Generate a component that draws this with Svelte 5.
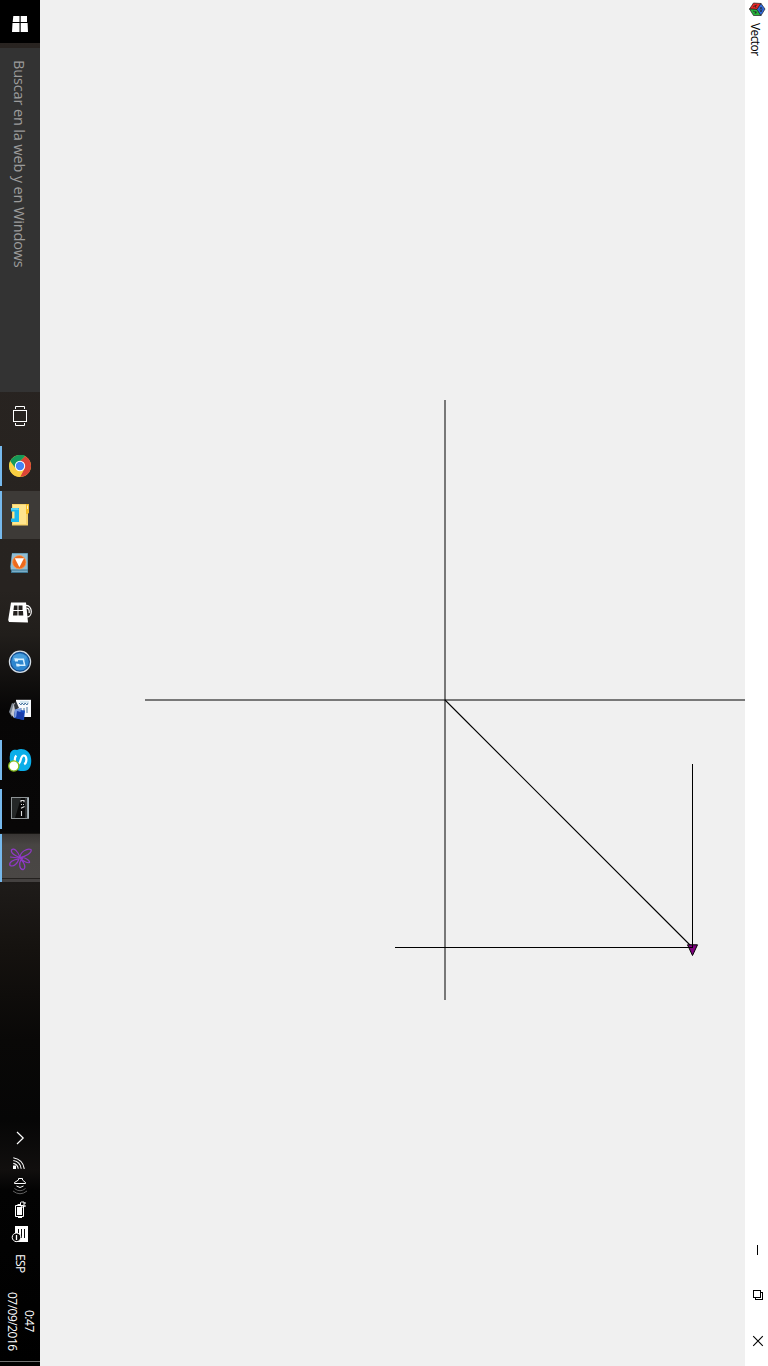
<script>
  const indicatorColor = '#76b9ed';
  const apps = [
    { id: 'taskview' },
    { id: 'chrome', open: true },
    { id: 'explorer', open: true, lit: true },
    { id: 'player' },
    { id: 'store' },
    { id: 'itunes' },
    { id: 'notes' },
    { id: 'skype', open: true },
    { id: 'console', open: true },
    { id: 'vector', open: true, lit: true, current: true }
  ];
</script>

<div class="screen">
  <aside class="taskbar">
    <div class="start">
      <svg width="40" height="43" viewBox="0 0 40 43" fill="#fff">
        <path d="M13.3 16H19.5V22H12.7ZM20.7 16H27V22H20.7ZM12.5 23H19.5V32H12ZM20.7 23H27.6L28 32H20.7Z" />
      </svg>
    </div>
    <div class="search"><span>Buscar en la web y en Windows</span></div>
    <nav>
      {#each apps as app (app.id)}
        <div class="app" class:lit={app.lit} class:current={app.current}>
          {#if app.open}<i class="mark" style:background={indicatorColor}></i>{/if}
          {#if app.id === 'taskview'}
            <svg viewBox="0 392 40 49" fill="none" stroke="#fff">
              <rect x="13.5" y="410.5" width="13" height="11" />
              <path d="M15.5 409V406.5H24.5V409M15.5 423V425.5H24.5V423" />
            </svg>
          {:else if app.id === 'chrome'}
            <svg viewBox="0 441 40 49">
              <circle cx="20" cy="466" r="11" fill="#f9cf42" />
              <path d="M20 466L10.5 471.5A11 11 0 0 1 20 455L25 455.3L20 461Z" fill="#159a5a" />
              <path d="M20 461L25 456.2A11 11 0 0 1 25 475.8L20 477L24.3 468.5Z" fill="#db4437" />
              <path d="M20 461L25 456.2Q22 455 20 455L12 459L11 469Z" fill="#159a5a" />
              <path d="M10.2 461A11 11 0 0 0 20 477L24.5 468.5L16 469Z" fill="#f9cf42" />
              <circle cx="20" cy="466" r="5.2" fill="#fff" />
              <circle cx="20" cy="466" r="4.2" fill="#4285f4" />
            </svg>
          {:else if app.id === 'explorer'}
            <svg viewBox="0 490 40 49">
              <path d="M12 504H28V525.5H12Z" fill="#f6d36b" />
              <path d="M13 505H26V524H13Z" fill="#ffe58e" />
              <path d="M26 504H29V513L27.5 514H26Z" fill="#f5bd29" />
              <path d="M27 505.5H28V509H27Z" fill="#fff3c5" />
              <path d="M11 508H19V522H11V518.5H14.5V511.5H11Z" fill="#1cb8ed" />
              <path d="M11 508H18L19 510H11Z" fill="#54d2f8" />
            </svg>
          {:else if app.id === 'player'}
            <svg viewBox="0 539 40 49">
              <path d="M12 553H28V573H11V568L10 567Z" fill="#3f7893" />
              <path d="M12 553.5H27.5V569.5H10.5Z" fill="#91bdd4" />
              <path d="M12 570.5H27.5V572H12Z" fill="#79adc7" />
              <circle cx="19.3" cy="562.2" r="6.7" fill="#ed6a1d" stroke="#f8a15b" stroke-width=".8" />
              <path d="M14.8 558.3H24L19.4 567.2Z" fill="#fff" />
            </svg>
          {:else if app.id === 'store'}
            <svg viewBox="0 588 40 49">
              <path d="M11 602.5H26L28 622.5L9 622L8.2 620Z" fill="#fff" />
              <path d="M26 605.5C29 605 31.3 608.5 31.3 611.5S29.5 617 27 617M26.5 608.5C28.5 607.5 29.5 610 29.2 613" fill="none" stroke="#fff" stroke-width="1.2" />
              <path d="M14 605.5H17.5V610H13.5ZM18.5 605.5H22.5V610H18.5ZM13.4 611H17.5V615.5H13ZM18.5 611H23L23.3 615.5H18.5Z" fill="#24211f" />
            </svg>
          {:else if app.id === 'itunes'}
            <svg viewBox="0 637 40 49">
              <circle cx="20" cy="661.8" r="10.6" fill="#124c8c" stroke="#d4dde5" stroke-width="1.2" />
              <circle cx="20" cy="661.8" r="8.8" fill="#2d86cf" />
              <path d="M13 656Q20 651 27 657L25 661H13Z" fill="#62b3e8" opacity=".5" />
              <path d="M16 659.2H23.3L24.7 665.3H17.5" fill="none" stroke="#d5efff" stroke-width="1.5" />
              <path d="M14.3 658L18 659V661.5H15ZM16 663.5L19.5 664V666.5H16.5Z" fill="#d5efff" />
            </svg>
          {:else if app.id === 'notes'}
            <svg viewBox="0 686 40 49">
              <path d="M16 699.8H31V717H16Z" fill="#f7f9fc" />
              <path d="M19 703L21 705L22 703L24 705L25 703L27 705L28 703M21 708V713M24 708V713M27 707V713" fill="none" stroke="#4875a0" stroke-width="1" />
              <path d="M20 702H29" stroke="#7bb2d2" stroke-width=".6" />
              <path d="M9 712L12 703L14 704L12 717Z" fill="#7d8590" />
              <path d="M11 714L14 702.5L16 704L14 718Z" fill="#c6c9d0" />
              <path d="M16 701L19 708L15 710L14 705Z" fill="#33373d" />
              <path d="M15 709.5L25 710.5L24 720L14 718Z" fill="#174fc4" />
              <path d="M15 709.5L21 708L20 715L14 718Z" fill="#7898df" />
              <path d="M17 711L24 713L23 720L16 718Z" fill="#183caa" />
            </svg>
          {:else if app.id === 'skype'}
            <svg viewBox="0 735 40 49">
              <path d="M10 755C10 751 13.5 749 17 750C22 747.5 30 750 31 758C32 764 30 771 24 771C16 772 8 765 10 755Z" fill="#0aaee9" />
              <path d="M24.2 764.3C27.3 762.5 27 755.8 24 755.5C19.8 755.2 21.5 764 17.8 764.2C14.3 764.3 14 758 16.3 755.5" fill="none" stroke="#fff" stroke-width="2.2" />
              <circle cx="13.8" cy="766" r="5.1" fill="#fff" stroke="#87bd17" stroke-width="1.3" />
            </svg>
          {:else if app.id === 'console'}
            <svg viewBox="0 784 40 49">
              <rect x="11.5" y="797.5" width="17" height="21" fill="#090909" stroke="#8d9395" />
              <path d="M12 798H21L15 818H12Z" fill="#242727" />
              <path d="M28 798V818" stroke="#b2c0c7" stroke-width="1.7" />
              <path d="M26 798V818" stroke="#505556" />
              <path d="M24 802.2V800.5H21V802.2M21 804.5H22M23 804.5H24M24.5 806.5L21 808.3M21.5 811V816" fill="none" stroke="#dedede" stroke-width="1.1" />
            </svg>
          {:else}
            <svg viewBox="0 833 40 49" fill="none" stroke="#9138c8" stroke-width="1.2">
              <path d="M20 857.5C18.5 852 14 847 11.5 850C10.5 853 15 856 20 857.5ZM20 857.5C20 852 27 848 31 849.5C32.5 853 25 856.5 20 857.5ZM22 858C24 857 30 860 29.5 862.5C27.5 863.5 23 861 20 858ZM19 859C13 859.5 8.5 862.5 10 865.5C14 867.5 17.5 863 19 859ZM21 859.5C24.5 863 26.5 868 23 869.7C19 869 19 863.5 21 859.5ZM10 857L23 858.5" />
            </svg>
          {/if}
        </div>
      {/each}
    </nav>
    <div class="tray">
      <svg class="status" width="40" height="130" viewBox="0 1120 40 130" fill="none" stroke="#fff">
        <path d="M17 1132L23.2 1138L17 1144" stroke-width="1.2" />
        <path d="M13.3 1163.4Q17.8 1164.2 18.2 1168.8M13.3 1160.5Q20.3 1161.5 21.2 1168.8M13.3 1157.7Q23 1159.5 24.3 1168.8" stroke-width="1.1" />
        <path d="M13 1165.5H16V1169H13Z" fill="#fff" stroke="none" />
        <path d="M18.5 1178.5H22.5V1180L25.5 1182.5V1183.5H14.5V1182.5L18.5 1180Z" />
        <path d="M16.5 1186Q20 1189 23.5 1186" />
        <path d="M14.5 1188.5Q20 1193 25.5 1188.5M13 1191Q20 1196.5 27 1191" stroke="#626262" />
        <path d="M15.5 1205.5H23.5V1216.5H15.5ZM18 1217.5H22" />
        <path d="M17 1207H22V1215H17Z" fill="#fff" stroke="none" />
        <path d="M20.5 1202.5V1206L22 1207H24V1202H21.5ZM24 1203H26M24 1206H26M18 1204.5H21M18 1204V1206" />
        <path d="M15 1226H28V1242H15Z" fill="#fff" stroke="none" />
        <path d="M18.5 1229V1234M21.5 1229V1238M24.5 1229V1238" stroke="#090909" />
        <circle cx="16.5" cy="1237.3" r="4.3" fill="#090909" />
        <path d="M16.5 1235V1240" stroke-width="1.3" />
      </svg>
      <div class="language"><span>ESP</span></div>
      <div class="clock"><span class="time">0:47</span><span class="date">07/09/2016</span></div>
      <div class="desktop-edge"></div>
    </div>
  </aside>

  <main>
    <svg width="705" height="1366" viewBox="40 0 705 1366" fill="none" stroke="#000">
      <path d="M445 400V1000M145 700H745" />
      <path d="M692.5 764V947M395 947.5H692" shape-rendering="crispEdges" />
      <path d="M445 700L692 947" stroke-width="1.1" />
      <path d="M687.5 944.8H697.5L692.5 955.5Z" fill="#800080" />
      <path d="M692.5 940V948M685 947.5H693" shape-rendering="crispEdges" />
    </svg>
  </main>

  <header>
    <svg width="23" height="21" viewBox="745 0 23 21" stroke="#222" stroke-width=".7" stroke-linejoin="round">
      <path d="M749.5 9L753.5 3L761 3.5L757 9.5Z" fill="#e82424" />
      <path d="M749.5 9L757 9.5L761 15.5L753.5 15.5Z" fill="#26b63c" />
      <path d="M761 3.5L765 9L761 15.5L757 9.5Z" fill="#306be0" />
      <path d="M753 7L757 5M755 5L756 8M753 11L757 13M756 11L755 14M761 7Q763 9 761 12Q759 10 761 7" fill="none" />
    </svg>
    <h1>Vector</h1>
    <svg class="controls" width="23" height="131" viewBox="745 1235 23 131" fill="none" stroke="#000">
      <path d="M757.5 1245V1255" shape-rendering="crispEdges" />
      <path d="M753.5 1290.5H760.5V1297.5H753.5ZM761 1292.5H762.5V1299.5H755.5V1298" shape-rendering="crispEdges" />
      <path d="M753.2 1336.2L762.8 1345.8M762.8 1336.2L753.2 1345.8" stroke-width="1.1" />
    </svg>
  </header>
</div>

<style>
  :global(body) { margin: 0; overflow: hidden; }
  .screen {
    display: grid;
    grid-template-columns: 40px 705px 23px;
    width: 768px;
    height: 1366px;
    background: #f0f0f0;
    font-family: "Open Sans", "Noto Sans", sans-serif;
  }
  svg { display: block; flex: none; }
  .taskbar {
    display: flex;
    flex-direction: column;
    min-height: 0;
    background: linear-gradient(180deg, #292421 0, #272320 590px, #211e1b 635px, #070606 710px, #080707 830px, #1e1b19 885px, #15120f 950px, #090807 1040px, #060606 1120px, #110f0e 1170px, #030303 1190px, #000 1366px);
  }
  .start { height: 43px; background: #000; }
  .search {
    box-sizing: border-box;
    height: 344px;
    margin-top: 5px;
    padding-top: 12px;
    display: flex;
    background: #333;
    color: #9c9c9c;
    font-size: 14.5px;
    line-height: 38px;
  }
  span, h1 { writing-mode: vertical-rl; white-space: nowrap; }
  .search span { width: 38px; letter-spacing: -.14px; }
  nav { display: flex; flex-direction: column; height: 490px; }
  .app { display: flex; height: 49px; }
  .app svg { width: 40px; height: 49px; }
  .mark { width: 2px; height: 40px; margin: 5px -2px 0 0; }
  .lit { background: linear-gradient(#292421 1px, #3d3a37 1px); }
  .lit .mark { height: 48px; margin-top: 1px; }
  .current { background: linear-gradient(#171513 1px, #393634 1px, #484543 12px, #4a4745 45px, #24211f 45px, #24211f 46px, #444140 46px); }
  .tray { display: flex; flex-direction: column; margin-top: auto; height: 246px; color: #fff; font-size: 12px; }
  .language { display: flex; height: 40px; padding-top: 4px; box-sizing: border-box; }
  .language span { width: 40px; line-height: 40px; letter-spacing: -.6px; }
  .clock { box-sizing: border-box; display: flex; flex-direction: row-reverse; justify-content: flex-start; padding: 0 2px 9px 0; height: 71px; }
  .clock span { width: 17px; line-height: 17px; text-align: center; letter-spacing: -.5px; }
  .desktop-edge { height: 1px; background: #707070; }
  header { display: flex; flex-direction: column; background: #fff; }
  h1 { width: 21px; margin: 2px 0 0; font-size: 12px; line-height: 21px; font-weight: 400; letter-spacing: -.6px; }
  .controls { margin-top: auto; }
</style>
